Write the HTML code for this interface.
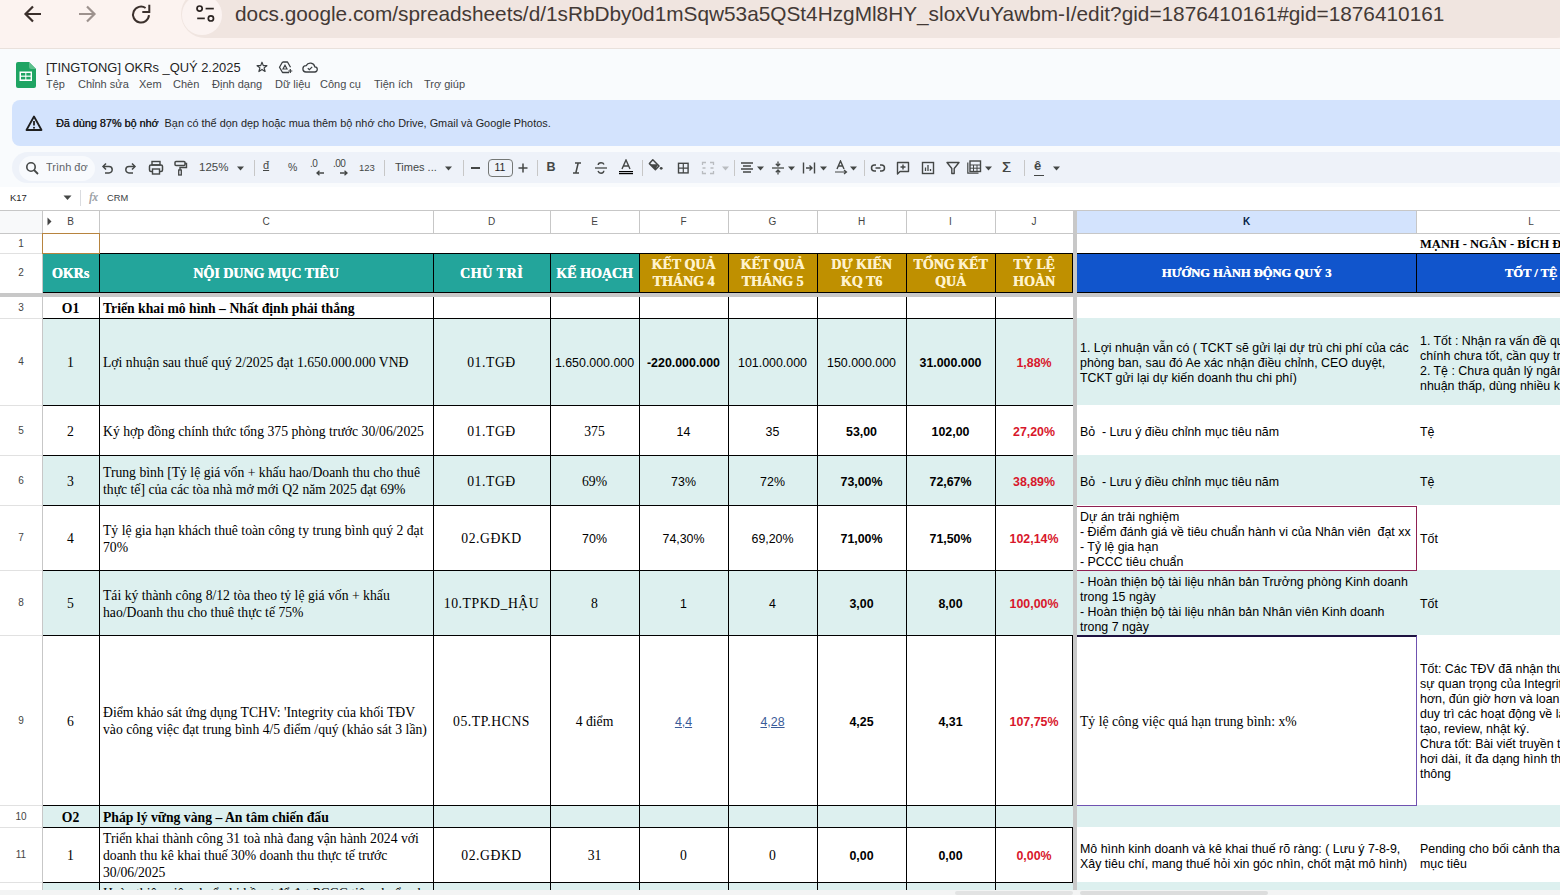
<!DOCTYPE html>
<html><head><meta charset="utf-8"><style>
*{margin:0;padding:0;box-sizing:border-box}
html,body{width:1560px;height:895px;overflow:hidden;background:#f9fbfd;font-family:"Liberation Sans",sans-serif}
.a{position:absolute}
.t{position:absolute;white-space:nowrap}
.cell{position:absolute;display:flex;align-items:center;overflow:hidden}
</style></head><body>
<div class="a" style="left:0;top:0;width:1560px;height:48px;background:#fcf3f0"></div><div class="a" style="left:0;top:48px;width:1560px;height:1px;background:#e9e1dc"></div><div class="a" style="left:181px;top:-10px;width:1400px;height:48px;border-radius:24px;background:#f0e5e0"></div><div class="a" style="left:182px;top:-5px;width:40px;height:40px;border-radius:50%;background:#fbf3f1"></div><svg class="a" style="left:22px;top:3px" width="22" height="22" viewBox="0 0 22 22"><path d="M19 11H4M11 3.5L3.5 11 11 18.5" fill="none" stroke="#3b302c" stroke-width="2.2"/></svg><svg class="a" style="left:76px;top:3px" width="22" height="22" viewBox="0 0 22 22"><path d="M3 11H18M11 3.5L18.5 11 11 18.5" fill="none" stroke="#9d928e" stroke-width="2.2"/></svg><svg class="a" style="left:120px;top:0px" width="40" height="30" viewBox="120 0 40 30"><path d="M149 15.2A8 8 0 1 1 145.6 8" fill="none" stroke="#3b302c" stroke-width="2"/><path d="M149.3 4.8V12H142.3" fill="none" stroke="#3b302c" stroke-width="2"/></svg><svg class="a" style="left:190px;top:0px" width="30" height="30" viewBox="190 0 30 30"><circle cx="199.6" cy="8.6" r="2.6" fill="none" stroke="#2b2422" stroke-width="1.7"/><path d="M205.6 8.6H213.8" stroke="#2b2422" stroke-width="1.7"/><circle cx="210.9" cy="18.4" r="2.6" fill="none" stroke="#2b2422" stroke-width="1.7"/><path d="M197.2 18.4H204.8" stroke="#2b2422" stroke-width="1.7"/></svg><div class="t" style="left:235px;top:1px;font-size:20.8px;line-height:26px;color:#433935;letter-spacing:0px">docs.google.com/spreadsheets/d/1sRbDby0d1mSqw53a5QSt4HzgMl8HY_sloxVuYawbm-I/edit?gid=1876410161#gid=1876410161</div><svg class="a" style="left:16px;top:62px" width="20" height="26" viewBox="0 0 20 26"><path d="M2 0H13L20 7V24a2 2 0 0 1-2 2H2a2 2 0 0 1-2-2V2a2 2 0 0 1 2-2z" fill="#1fa463"/><path d="M13 0L20 7H15a2 2 0 0 1-2-2z" fill="#5cc08d"/><rect x="3.5" y="9.5" width="12.5" height="9.5" fill="#fff"/><rect x="5" y="11" width="4.3" height="2.6" fill="#1fa463"/><rect x="10.3" y="11" width="4.3" height="2.6" fill="#1fa463"/><rect x="5" y="14.8" width="4.3" height="2.6" fill="#1fa463"/><rect x="10.3" y="14.8" width="4.3" height="2.6" fill="#1fa463"/></svg><div class="t" style="left:46px;top:59px;font-size:12.9px;line-height:17px;color:#1f1f1f">[TINGTONG] OKRs _QUÝ 2.2025</div><svg class="a" style="left:256px;top:61px" width="12" height="12" viewBox="0 0 12 12"><path d="M6 1.2L7.3 4.6 10.9 4.7 8.1 6.9 9.1 10.5 6 8.4 2.9 10.5 3.9 6.9 1.1 4.7 4.7 4.6z" fill="none" stroke="#3c4043" stroke-width="1.2" stroke-linejoin="round"/></svg><svg class="a" style="left:278px;top:61px" width="15" height="13" viewBox="0 0 15 13"><path d="M4.5 1H9.5L12.5 6.2M11 11.5H4.5L1.5 6.2 4.5 1" fill="none" stroke="#3c4043" stroke-width="1.3" stroke-linejoin="round"/><path d="M7 4.3L9 8H5z" fill="none" stroke="#3c4043" stroke-width="1.2"/><path d="M12.3 8V12M10.3 10H14.3" stroke="#3c4043" stroke-width="1.2"/></svg><svg class="a" style="left:302px;top:62px" width="16" height="11" viewBox="0 0 16 11"><path d="M4 10H12.5a2.6 2.6 0 0 0 0.3-5.2A4.6 4.6 0 0 0 4.2 3.6 3.2 3.2 0 0 0 4 10z" fill="none" stroke="#3c4043" stroke-width="1.3"/><path d="M5.8 6.2L7.4 7.7 10.2 4.9" fill="none" stroke="#3c4043" stroke-width="1.2"/></svg><div class="t" style="left:46px;top:77px;font-size:11px;line-height:14px;color:#474a4d">Tệp</div><div class="t" style="left:78px;top:77px;font-size:11px;line-height:14px;color:#474a4d">Chỉnh sửa</div><div class="t" style="left:139px;top:77px;font-size:11px;line-height:14px;color:#474a4d">Xem</div><div class="t" style="left:173px;top:77px;font-size:11px;line-height:14px;color:#474a4d">Chèn</div><div class="t" style="left:212px;top:77px;font-size:11px;line-height:14px;color:#474a4d">Định dạng</div><div class="t" style="left:275px;top:77px;font-size:11px;line-height:14px;color:#474a4d">Dữ liệu</div><div class="t" style="left:320px;top:77px;font-size:11px;line-height:14px;color:#474a4d">Công cụ</div><div class="t" style="left:374px;top:77px;font-size:11px;line-height:14px;color:#474a4d">Tiện ích</div><div class="t" style="left:424px;top:77px;font-size:11px;line-height:14px;color:#474a4d">Trợ giúp</div><div class="a" style="left:12px;top:100px;width:1560px;height:46px;border-radius:8px;background:#d3e3fd"></div><svg class="a" style="left:25px;top:115px" width="18" height="16" viewBox="0 0 18 16"><path d="M9 1.5L16.5 15H1.5z" fill="none" stroke="#1f1f1f" stroke-width="1.8" stroke-linejoin="round"/><path d="M9 6V10.5" stroke="#1f1f1f" stroke-width="1.8"/><circle cx="9" cy="12.7" r="1" fill="#1f1f1f"/></svg><div class="t" style="left:56px;top:116px;font-size:10.9px;line-height:14px;color:#1f1f1f"><span style="font-size:10.8px;text-shadow:0.3px 0 0 #1f1f1f">Đã dùng 87% bộ nhớ</span>&nbsp; Bạn có thể dọn dẹp hoặc mua thêm bộ nhớ cho Drive, Gmail và Google Photos.</div><div class="a" style="left:12px;top:152px;width:1560px;height:31px;border-radius:16px;background:#eef2f9"></div><div class="a" style="left:19px;top:156px;width:76px;height:25px;border-radius:13px;background:#f8fafd"></div><svg class="a" style="left:24.7px;top:160.5px" width="14" height="14" viewBox="0 0 14 14"><circle cx="6" cy="6" r="4.2" fill="none" stroke="#444746" stroke-width="1.6"/><path d="M9 9L13 13" stroke="#444746" stroke-width="1.8"/></svg><div class="t" style="left:46px;top:160px;width:42px;overflow:hidden;font-size:11px;line-height:15px;color:#5f6368">Trình đơn</div><svg class="a" style="left:99.7px;top:160.5px" width="14" height="14" viewBox="0 0 14 14"><path d="M3.5 5.5H9a3.2 3.2 0 0 1 0 6.4H5" fill="none" stroke="#444746" stroke-width="1.5"/><path d="M6 2.5L3 5.5 6 8.5" fill="none" stroke="#444746" stroke-width="1.5"/></svg><svg class="a" style="left:123.80000000000001px;top:160.5px" width="14" height="14" viewBox="0 0 14 14"><path d="M10.5 5.5H5a3.2 3.2 0 0 0 0 6.4H9" fill="none" stroke="#444746" stroke-width="1.5"/><path d="M8 2.5L11 5.5 8 8.5" fill="none" stroke="#444746" stroke-width="1.5"/></svg><svg class="a" style="left:147.8px;top:159.5px" width="16" height="16" viewBox="0 0 16 16"><rect x="4" y="1.5" width="8" height="3.5" fill="none" stroke="#444746" stroke-width="1.4"/><rect x="1.5" y="5" width="13" height="6.5" rx="1.5" fill="none" stroke="#444746" stroke-width="1.5"/><rect x="4.5" y="9" width="7" height="5" fill="#edf2fa" stroke="#444746" stroke-width="1.4"/></svg><svg class="a" style="left:171.7px;top:159.5px" width="16" height="16" viewBox="0 0 16 16"><rect x="3" y="1.5" width="10" height="4" rx="1" fill="none" stroke="#444746" stroke-width="1.5"/><path d="M13 3.5H14.5V7.5H8V10" fill="none" stroke="#444746" stroke-width="1.4"/><rect x="6.7" y="10" width="2.6" height="5" fill="none" stroke="#444746" stroke-width="1.3"/></svg><div class="t" style="left:199px;top:160px;font-size:11.5px;line-height:15px;color:#444746">125%</div><svg class="a" style="left:235.5px;top:163.5px" width="9" height="9" viewBox="0 0 9 9"><path d="M1 2.5H8L4.5 6.5z" fill="#444746"/></svg><div class="a" style="left:253.5px;top:160px;width:1px;height:16px;background:#c7c7c7"></div><div class="t" style="left:263px;top:158px;font-size:11px;line-height:15px;color:#444746;text-decoration:underline">đ</div><div class="t" style="left:288px;top:160px;font-size:10.5px;line-height:15px;color:#444746">%</div><div class="t" style="left:310px;top:157px;font-size:10px;line-height:13px;color:#444746;letter-spacing:-0.5px">.0</div><svg class="a" style="left:315.0px;top:170.0px" width="10" height="6" viewBox="0 0 10 6"><path d="M9 3H2M4.5 0.8L2 3 4.5 5.2" fill="none" stroke="#444746" stroke-width="1.3"/></svg><div class="t" style="left:333px;top:157px;font-size:10px;line-height:13px;color:#444746;letter-spacing:-0.5px">.00</div><svg class="a" style="left:339.0px;top:170.0px" width="10" height="6" viewBox="0 0 10 6"><path d="M1 3H8M5.5 0.8L8 3 5.5 5.2" fill="none" stroke="#444746" stroke-width="1.3"/></svg><div class="t" style="left:359px;top:161px;font-size:9.5px;line-height:13px;color:#444746">123</div><div class="a" style="left:383.5px;top:160px;width:1px;height:16px;background:#c7c7c7"></div><div class="t" style="left:395px;top:160px;font-size:11px;line-height:15px;color:#444746">Times ...</div><svg class="a" style="left:444.0px;top:163.5px" width="9" height="9" viewBox="0 0 9 9"><path d="M1 2.5H8L4.5 6.5z" fill="#444746"/></svg><div class="a" style="left:463.4px;top:160px;width:1px;height:16px;background:#c7c7c7"></div><div class="a" style="left:471px;top:167px;width:9px;height:1.5px;background:#444746"></div><div class="a" style="left:487.5px;top:158.5px;width:25px;height:18px;border:1px solid #747775;border-radius:4px"></div><div class="t" style="left:487.5px;width:25px;top:160px;text-align:center;font-size:10.5px;line-height:15px;color:#1f1f1f">11</div><svg class="a" style="left:518.2px;top:162.5px" width="10" height="10" viewBox="0 0 10 10"><path d="M5 0.5V9.5M0.5 5H9.5" stroke="#444746" stroke-width="1.5"/></svg><div class="a" style="left:536.5px;top:160px;width:1px;height:16px;background:#c7c7c7"></div><div class="t" style="left:546.5px;top:159.5px;font-size:12.5px;line-height:15px;font-weight:bold;color:#444746">B</div><svg class="a" style="left:569.5px;top:160.5px" width="14" height="14" viewBox="0 0 14 14"><path d="M5 2H11M3 12H9M8.2 2L5.8 12" fill="none" stroke="#444746" stroke-width="1.5"/></svg><svg class="a" style="left:593.6px;top:160.5px" width="14" height="14" viewBox="0 0 14 14"><path d="M1 7H13" stroke="#444746" stroke-width="1.3"/><path d="M10 3.5C9.5 2.2 8.4 1.8 7 1.8 5.2 1.8 4.2 2.8 4.2 4" fill="none" stroke="#444746" stroke-width="1.4"/><path d="M4 10C4.6 11.6 5.6 12.2 7 12.2 8.8 12.2 9.8 11.2 9.8 9.8" fill="none" stroke="#444746" stroke-width="1.4"/></svg><svg class="a" style="left:618.7px;top:159.0px" width="14" height="16" viewBox="0 0 14 16"><path d="M3 10L7 1L11 10M4.5 7H9.5" fill="none" stroke="#444746" stroke-width="1.4"/><rect x="0" y="12" width="14" height="1.2" fill="#000"/><rect x="0" y="14" width="14" height="1.2" fill="#000"/></svg><div class="a" style="left:641.5px;top:160px;width:1px;height:16px;background:#c7c7c7"></div><svg class="a" style="left:645px;top:155px" width="20" height="20" viewBox="645 155 20 20"><path d="M652.8 159.8L659 166 655.4 169.6 649.4 163.6z" fill="none" stroke="#444746" stroke-width="1.5" stroke-linejoin="round"/><path d="M650.2 164.3H658.3L655.4 169.2z" fill="#444746"/><circle cx="661.2" cy="168.3" r="1.4" fill="#444746"/></svg><svg class="a" style="left:675px;top:160px" width="16" height="16" viewBox="675 160 16 16"><rect x="678.5" y="163.3" width="9.6" height="9.6" fill="none" stroke="#444746" stroke-width="1.4"/><path d="M683.3 163.3V172.9M678.5 168.1H688.1" stroke="#444746" stroke-width="1.2"/></svg><svg class="a" style="left:701.4px;top:160.5px" width="14" height="14" viewBox="0 0 14 14"><path d="M1.5 4V1.5H5M9 1.5H12.5V4M1.5 10V12.5H5M9 12.5H12.5V10M1.5 7H4.5M9.5 7H12.5" fill="none" stroke="#b9bcc0" stroke-width="1.3"/></svg><svg class="a" style="left:720.5px;top:163.5px" width="9" height="9" viewBox="0 0 9 9"><path d="M1 2.5H8L4.5 6.5z" fill="#b9bcc0"/></svg><div class="a" style="left:733.5px;top:160px;width:1px;height:16px;background:#c7c7c7"></div><svg class="a" style="left:739.5px;top:161.0px" width="14" height="13" viewBox="0 0 14 13"><path d="M1 2H13M3 5H11M1 8H13M3 11H11" stroke="#444746" stroke-width="1.4"/></svg><svg class="a" style="left:756.0px;top:163.5px" width="9" height="9" viewBox="0 0 9 9"><path d="M1 2.5H8L4.5 6.5z" fill="#444746"/></svg><svg class="a" style="left:771.0px;top:160.5px" width="14" height="14" viewBox="0 0 14 14"><path d="M1 7H13" stroke="#444746" stroke-width="1.3"/><path d="M7 0.5V5M4.8 2.8L7 5 9.2 2.8M7 13.5V9M4.8 11.2L7 9 9.2 11.2" fill="none" stroke="#444746" stroke-width="1.3"/></svg><svg class="a" style="left:786.5px;top:163.5px" width="9" height="9" viewBox="0 0 9 9"><path d="M1 2.5H8L4.5 6.5z" fill="#444746"/></svg><svg class="a" style="left:802.0px;top:160.5px" width="14" height="14" viewBox="0 0 14 14"><path d="M1.5 1.5V12.5M12.5 1.5V12.5M4 7H10M7.5 4.5L10 7 7.5 9.5" fill="none" stroke="#444746" stroke-width="1.4"/></svg><svg class="a" style="left:818.8px;top:163.5px" width="9" height="9" viewBox="0 0 9 9"><path d="M1 2.5H8L4.5 6.5z" fill="#444746"/></svg><svg class="a" style="left:834.0px;top:160.0px" width="14" height="15" viewBox="0 0 14 15"><path d="M3 9L6.5 1 10 9M4.3 6H8.7" fill="none" stroke="#444746" stroke-width="1.4"/><path d="M1 12H12M10 10L12.5 12 10 14" fill="none" stroke="#444746" stroke-width="1.2"/></svg><svg class="a" style="left:849.4px;top:163.5px" width="9" height="9" viewBox="0 0 9 9"><path d="M1 2.5H8L4.5 6.5z" fill="#444746"/></svg><div class="a" style="left:863.7px;top:160px;width:1px;height:16px;background:#c7c7c7"></div><svg class="a" style="left:870.0px;top:160.5px" width="16" height="14" viewBox="0 0 16 14"><path d="M6 4H4.5a3 3 0 0 0 0 6H6M10 4h1.5a3 3 0 0 1 0 6H10M5.5 7h5" fill="none" stroke="#444746" stroke-width="1.5"/></svg><svg class="a" style="left:895.7px;top:160.5px" width="14" height="14" viewBox="0 0 14 14"><path d="M1.5 1.5H12.5V10.5H4L1.5 13z" fill="none" stroke="#444746" stroke-width="1.4" stroke-linejoin="round"/><path d="M7 3.5V8.5M4.5 6H9.5" stroke="#444746" stroke-width="1.4"/></svg><svg class="a" style="left:920.5px;top:160.5px" width="14" height="14" viewBox="0 0 14 14"><rect x="1.5" y="1.5" width="11" height="11" fill="none" stroke="#444746" stroke-width="1.4"/><path d="M4.5 10V6.5M7 10V4M9.5 10V8" stroke="#444746" stroke-width="1.3"/></svg><svg class="a" style="left:945.6px;top:160.5px" width="14" height="14" viewBox="0 0 14 14"><path d="M1 1.5H13L8.2 7.5V12.5H5.8V7.5z" fill="none" stroke="#444746" stroke-width="1.4" stroke-linejoin="round"/></svg><svg class="a" style="left:967.0px;top:160.0px" width="15" height="15" viewBox="0 0 15 15"><path d="M0.8 2.5V13.2H11.5" fill="none" stroke="#444746" stroke-width="1.2"/><rect x="3" y="1" width="10.5" height="10.5" fill="none" stroke="#444746" stroke-width="1.4"/><path d="M3 5H13.5M3 8.2H13.5M6.5 5V11.5M10 5V11.5" stroke="#444746" stroke-width="1"/></svg><svg class="a" style="left:984.4px;top:163.5px" width="9" height="9" viewBox="0 0 9 9"><path d="M1 2.5H8L4.5 6.5z" fill="#444746"/></svg><div class="t" style="left:1002px;top:159px;font-size:14px;line-height:16px;color:#444746;text-shadow:0.4px 0 0 #444746">Σ</div><div class="a" style="left:1024.4px;top:160px;width:1px;height:16px;background:#c7c7c7"></div><div class="t" style="left:1034px;top:158px;font-size:13px;line-height:16px;font-weight:bold;color:#444746">ê</div><div class="a" style="left:1034px;top:175px;width:10px;height:1.2px;background:#444746"></div><svg class="a" style="left:1051.9px;top:163.5px" width="9" height="9" viewBox="0 0 9 9"><path d="M1 2.5H8L4.5 6.5z" fill="#444746"/></svg><div class="a" style="left:0;top:187px;width:1560px;height:23px;background:#fff"></div><div class="t" style="left:10px;top:192px;font-size:9.5px;line-height:12px;color:#1f1f1f">K17</div><div class="t" style="left:107px;top:192px;font-size:9.3px;line-height:12px;color:#3c4043">CRM</div><svg class="a" style="left:63px;top:195px" width="9" height="6" viewBox="0 0 9 6"><path d="M0.5 0.5H8.5L4.5 5z" fill="#444746"/></svg><div class="a" style="left:80px;top:190px;width:1px;height:16px;background:#dadce0"></div><div class="t" style="left:89px;top:191px;font-family:'Liberation Serif',serif;font-style:italic;font-size:12px;line-height:13px;color:#a0a4a8;text-shadow:0.3px 0 0 #a0a4a8">fx</div><div class="a" style="left:0;top:210px;width:1560px;height:685px;background:#fff"></div><div class="a" style="left:0;top:210px;width:1560px;height:1px;background:#c7c7c7"></div><div class="a" style="left:0;top:233px;width:1560px;height:1px;background:#c7c7c7"></div><div class="a" style="left:1077px;top:211px;width:339px;height:22px;background:#d3e3fd"></div><div class="a" style="left:0;top:211px;width:42px;height:22px;background:#f8f9fa"></div><div class="a" style="left:42px;top:211px;width:1px;height:22px;background:#c7c7c7"></div><svg class="a" style="left:47px;top:217px" width="5" height="9" viewBox="0 0 5 9"><path d="M0.5 0.5L4.5 4.5 0.5 8.5z" fill="#444"/></svg><div class="a" style="left:99px;top:211px;width:1px;height:22px;background:#c7c7c7"></div><div class="t" style="left:42px;width:57px;top:215px;text-align:center;font-size:10px;line-height:14px;color:#444;font-weight:normal">B</div><div class="a" style="left:433px;top:211px;width:1px;height:22px;background:#c7c7c7"></div><div class="t" style="left:99px;width:334px;top:215px;text-align:center;font-size:10px;line-height:14px;color:#444;font-weight:normal">C</div><div class="a" style="left:550px;top:211px;width:1px;height:22px;background:#c7c7c7"></div><div class="t" style="left:433px;width:117px;top:215px;text-align:center;font-size:10px;line-height:14px;color:#444;font-weight:normal">D</div><div class="a" style="left:639px;top:211px;width:1px;height:22px;background:#c7c7c7"></div><div class="t" style="left:550px;width:89px;top:215px;text-align:center;font-size:10px;line-height:14px;color:#444;font-weight:normal">E</div><div class="a" style="left:728px;top:211px;width:1px;height:22px;background:#c7c7c7"></div><div class="t" style="left:639px;width:89px;top:215px;text-align:center;font-size:10px;line-height:14px;color:#444;font-weight:normal">F</div><div class="a" style="left:817px;top:211px;width:1px;height:22px;background:#c7c7c7"></div><div class="t" style="left:728px;width:89px;top:215px;text-align:center;font-size:10px;line-height:14px;color:#444;font-weight:normal">G</div><div class="a" style="left:906px;top:211px;width:1px;height:22px;background:#c7c7c7"></div><div class="t" style="left:817px;width:89px;top:215px;text-align:center;font-size:10px;line-height:14px;color:#444;font-weight:normal">H</div><div class="a" style="left:995px;top:211px;width:1px;height:22px;background:#c7c7c7"></div><div class="t" style="left:906px;width:89px;top:215px;text-align:center;font-size:10px;line-height:14px;color:#444;font-weight:normal">I</div><div class="a" style="left:1073px;top:211px;width:1px;height:22px;background:#c7c7c7"></div><div class="t" style="left:995px;width:78px;top:215px;text-align:center;font-size:10px;line-height:14px;color:#444;font-weight:normal">J</div><div class="a" style="left:1416px;top:211px;width:1px;height:22px;background:#c7c7c7"></div><div class="t" style="left:1077px;width:339px;top:215px;text-align:center;font-size:10px;line-height:14px;color:#041e49;font-weight:bold">K</div><div class="a" style="left:1646px;top:211px;width:1px;height:22px;background:#c7c7c7"></div><div class="t" style="left:1416px;width:230px;top:215px;text-align:center;font-size:10px;line-height:14px;color:#444;font-weight:normal">L</div><div class="a" style="left:42px;top:318px;width:1518px;height:87px;background:#ddf0ef"></div><div class="a" style="left:42px;top:455px;width:1518px;height:50px;background:#ddf0ef"></div><div class="a" style="left:42px;top:570px;width:1518px;height:65px;background:#ddf0ef"></div><div class="a" style="left:42px;top:805px;width:1518px;height:22px;background:#ddf0ef"></div><div class="a" style="left:42px;top:882px;width:1518px;height:30px;background:#ddf0ef"></div><div class="a" style="left:42px;top:253px;width:597px;height:39px;background:#23a59b"></div><div class="a" style="left:639px;top:253px;width:434px;height:39px;background:#bf9000"></div><div class="a" style="left:1077px;top:253px;width:483px;height:39px;background:#1155cc"></div><div class="a" style="left:99px;top:253px;width:1px;height:40px;background:#000"></div><div class="a" style="left:99px;top:297px;width:1px;height:600px;background:#000"></div><div class="a" style="left:433px;top:253px;width:1px;height:40px;background:#000"></div><div class="a" style="left:433px;top:297px;width:1px;height:600px;background:#000"></div><div class="a" style="left:550px;top:253px;width:1px;height:40px;background:#000"></div><div class="a" style="left:550px;top:297px;width:1px;height:600px;background:#000"></div><div class="a" style="left:639px;top:253px;width:1px;height:40px;background:#000"></div><div class="a" style="left:639px;top:297px;width:1px;height:600px;background:#000"></div><div class="a" style="left:728px;top:253px;width:1px;height:40px;background:#000"></div><div class="a" style="left:728px;top:297px;width:1px;height:600px;background:#000"></div><div class="a" style="left:817px;top:253px;width:1px;height:40px;background:#000"></div><div class="a" style="left:817px;top:297px;width:1px;height:600px;background:#000"></div><div class="a" style="left:906px;top:253px;width:1px;height:40px;background:#000"></div><div class="a" style="left:906px;top:297px;width:1px;height:600px;background:#000"></div><div class="a" style="left:995px;top:253px;width:1px;height:40px;background:#000"></div><div class="a" style="left:995px;top:297px;width:1px;height:600px;background:#000"></div><div class="a" style="left:1072px;top:253px;width:1px;height:40px;background:#000"></div><div class="a" style="left:1072px;top:635px;width:1px;height:171px;background:#000"></div><div class="a" style="left:1072px;top:827px;width:1px;height:56px;background:#000"></div><div class="a" style="left:1416px;top:253px;width:1px;height:40px;background:#000"></div><div class="a" style="left:42px;top:253px;width:1031px;height:1px;background:#000"></div><div class="a" style="left:1077px;top:253px;width:483px;height:1px;background:#000"></div><div class="a" style="left:42px;top:292px;width:1031px;height:1px;background:#000"></div><div class="a" style="left:1077px;top:292px;width:483px;height:1px;background:#000"></div><div class="a" style="left:42px;top:318px;width:1031px;height:1px;background:#000"></div><div class="a" style="left:42px;top:405px;width:1031px;height:1px;background:#000"></div><div class="a" style="left:42px;top:455px;width:1031px;height:1px;background:#000"></div><div class="a" style="left:42px;top:505px;width:1031px;height:1px;background:#000"></div><div class="a" style="left:42px;top:570px;width:1031px;height:1px;background:#000"></div><div class="a" style="left:42px;top:635px;width:1031px;height:1px;background:#000"></div><div class="a" style="left:42px;top:805px;width:1031px;height:1px;background:#000"></div><div class="a" style="left:42px;top:827px;width:1031px;height:1px;background:#000"></div><div class="a" style="left:42px;top:882px;width:1031px;height:1px;background:#000"></div><div class="a" style="left:0;top:293px;width:1560px;height:4px;background:#c8c8c8"></div><div class="a" style="left:1073px;top:211px;width:4px;height:690px;background:#c8c8c8"></div><div class="a" style="left:42px;top:233px;width:1px;height:670px;background:#c7c7c7"></div><div class="a" style="left:0;top:253px;width:42px;height:1px;background:#e1e1e1"></div><div class="t" style="left:0;width:42px;top:237px;text-align:center;font-size:10px;line-height:13px;color:#444">1</div><div class="t" style="left:0;width:42px;top:266px;text-align:center;font-size:10px;line-height:13px;color:#444">2</div><div class="a" style="left:0;top:318px;width:42px;height:1px;background:#e1e1e1"></div><div class="t" style="left:0;width:42px;top:301px;text-align:center;font-size:10px;line-height:13px;color:#444">3</div><div class="a" style="left:0;top:405px;width:42px;height:1px;background:#e1e1e1"></div><div class="t" style="left:0;width:42px;top:355px;text-align:center;font-size:10px;line-height:13px;color:#444">4</div><div class="a" style="left:0;top:455px;width:42px;height:1px;background:#e1e1e1"></div><div class="t" style="left:0;width:42px;top:424px;text-align:center;font-size:10px;line-height:13px;color:#444">5</div><div class="a" style="left:0;top:505px;width:42px;height:1px;background:#e1e1e1"></div><div class="t" style="left:0;width:42px;top:474px;text-align:center;font-size:10px;line-height:13px;color:#444">6</div><div class="a" style="left:0;top:570px;width:42px;height:1px;background:#e1e1e1"></div><div class="t" style="left:0;width:42px;top:531px;text-align:center;font-size:10px;line-height:13px;color:#444">7</div><div class="a" style="left:0;top:635px;width:42px;height:1px;background:#e1e1e1"></div><div class="t" style="left:0;width:42px;top:596px;text-align:center;font-size:10px;line-height:13px;color:#444">8</div><div class="a" style="left:0;top:805px;width:42px;height:1px;background:#e1e1e1"></div><div class="t" style="left:0;width:42px;top:714px;text-align:center;font-size:10px;line-height:13px;color:#444">9</div><div class="a" style="left:0;top:827px;width:42px;height:1px;background:#e1e1e1"></div><div class="t" style="left:0;width:42px;top:810px;text-align:center;font-size:10px;line-height:13px;color:#444">10</div><div class="a" style="left:0;top:882px;width:42px;height:1px;background:#e1e1e1"></div><div class="t" style="left:0;width:42px;top:848px;text-align:center;font-size:10px;line-height:13px;color:#444">11</div><div class="a" style="left:0;top:912px;width:42px;height:1px;background:#e1e1e1"></div><div class="t" style="left:0;width:42px;top:891px;text-align:center;font-size:10px;line-height:13px;color:#444">12</div><div class="a" style="left:42px;top:233px;width:58px;height:21px;border:1px solid #b7843f"></div><div class="cell" style="left:42px;top:253px;width:57px;height:39px;justify-content:center;padding:0 4px;"><div style="font-family:'Liberation Serif', serif;font-size:14px;line-height:17px;font-weight:bold;color:#ffffff;text-align:center;white-space:nowrap;position:relative;top:0.5px;letter-spacing:0px;text-shadow:0.35px 0 0 currentColor">OKRs</div></div><div class="cell" style="left:99px;top:253px;width:334px;height:39px;justify-content:center;padding:0 4px;"><div style="font-family:'Liberation Serif', serif;font-size:14px;line-height:17px;font-weight:bold;color:#ffffff;text-align:center;white-space:nowrap;position:relative;top:0.5px;letter-spacing:0px;text-shadow:0.35px 0 0 currentColor">NỘI DUNG MỤC TIÊU</div></div><div class="cell" style="left:433px;top:253px;width:117px;height:39px;justify-content:center;padding:0 4px;"><div style="font-family:'Liberation Serif', serif;font-size:14px;line-height:17px;font-weight:bold;color:#ffffff;text-align:center;white-space:nowrap;position:relative;top:0.5px;letter-spacing:0.55px;text-shadow:0.35px 0 0 currentColor">CHỦ TRÌ</div></div><div class="cell" style="left:550px;top:253px;width:89px;height:39px;justify-content:center;padding:0 4px;"><div style="font-family:'Liberation Serif', serif;font-size:14px;line-height:17px;font-weight:bold;color:#ffffff;text-align:center;white-space:nowrap;position:relative;top:0.5px;letter-spacing:0px;text-shadow:0.35px 0 0 currentColor">KẾ HOẠCH</div></div><div class="cell" style="left:639px;top:253px;width:89px;height:39px;justify-content:center;padding:0 4px;"><div style="font-family:'Liberation Serif', serif;font-size:14px;line-height:17px;font-weight:bold;color:#fff2cc;text-align:center;white-space:nowrap;position:relative;top:0.5px;letter-spacing:0px;text-shadow:0.35px 0 0 currentColor">KẾT QUẢ<br>THÁNG 4</div></div><div class="cell" style="left:728px;top:253px;width:89px;height:39px;justify-content:center;padding:0 4px;"><div style="font-family:'Liberation Serif', serif;font-size:14px;line-height:17px;font-weight:bold;color:#fff2cc;text-align:center;white-space:nowrap;position:relative;top:0.5px;letter-spacing:0px;text-shadow:0.35px 0 0 currentColor">KẾT QUẢ<br>THÁNG 5</div></div><div class="cell" style="left:817px;top:253px;width:89px;height:39px;justify-content:center;padding:0 4px;"><div style="font-family:'Liberation Serif', serif;font-size:14px;line-height:17px;font-weight:bold;color:#fff2cc;text-align:center;white-space:nowrap;position:relative;top:0.5px;letter-spacing:0px;text-shadow:0.35px 0 0 currentColor">DỰ KIẾN<br>KQ T6</div></div><div class="cell" style="left:906px;top:253px;width:89px;height:39px;justify-content:center;padding:0 4px;"><div style="font-family:'Liberation Serif', serif;font-size:14px;line-height:17px;font-weight:bold;color:#fff2cc;text-align:center;white-space:nowrap;position:relative;top:0.5px;letter-spacing:0px;text-shadow:0.35px 0 0 currentColor">TỔNG KẾT<br>QUẢ</div></div><div class="cell" style="left:995px;top:253px;width:78px;height:39px;justify-content:center;padding:0 4px;"><div style="font-family:'Liberation Serif', serif;font-size:14px;line-height:17px;font-weight:bold;color:#fff2cc;text-align:center;white-space:nowrap;position:relative;top:0.5px;letter-spacing:0px;text-shadow:0.35px 0 0 currentColor">TỶ LỆ<br>HOÀN</div></div><div class="cell" style="left:1077px;top:253px;width:339px;height:39px;justify-content:center;padding:0 4px;"><div style="font-family:'Liberation Serif', serif;font-size:12.5px;line-height:17px;font-weight:bold;color:#ffffff;text-align:center;white-space:nowrap;position:relative;top:0.5px;letter-spacing:0px;text-shadow:0.35px 0 0 currentColor">HƯỚNG HÀNH ĐỘNG QUÝ 3</div></div><div class="cell" style="left:1416px;top:253px;width:230px;height:39px;justify-content:center;padding:0 4px;"><div style="font-family:'Liberation Serif', serif;font-size:12.5px;line-height:17px;font-weight:bold;color:#ffffff;text-align:center;white-space:nowrap;position:relative;top:0.5px;letter-spacing:0px;text-shadow:0.35px 0 0 currentColor">TỐT / TỆ</div></div><div class="cell" style="left:1416px;top:233px;width:230px;height:20px;justify-content:flex-start;padding:0 4px;"><div style="font-family:'Liberation Serif', serif;font-size:12.5px;line-height:17px;font-weight:bold;color:#000;text-align:left;white-space:nowrap;position:relative;top:1px;letter-spacing:0px;">MẠNH - NGÂN - BÍCH ĐÀO</div></div><div class="cell" style="left:42px;top:297px;width:57px;height:21px;justify-content:center;padding:0 4px;"><div style="font-family:'Liberation Serif', serif;font-size:13.7px;line-height:17px;font-weight:bold;color:#000;text-align:center;white-space:nowrap;position:relative;top:1px;letter-spacing:0px;">O1</div></div><div class="cell" style="left:99px;top:297px;width:334px;height:21px;justify-content:flex-start;padding:0 4px;"><div style="font-family:'Liberation Serif', serif;font-size:13.7px;line-height:17px;font-weight:bold;color:#000;text-align:left;white-space:nowrap;position:relative;top:1px;letter-spacing:0px;">Triển khai mô hình – Nhất định phải thắng</div></div><div class="cell" style="left:42px;top:318px;width:57px;height:87px;justify-content:center;padding:0 4px;"><div style="font-family:'Liberation Serif', serif;font-size:13.7px;line-height:17px;font-weight:normal;color:#000;text-align:center;white-space:nowrap;position:relative;top:1px;letter-spacing:0px;">1</div></div><div class="cell" style="left:99px;top:318px;width:334px;height:87px;justify-content:flex-start;padding:0 4px;"><div style="font-family:'Liberation Serif', serif;font-size:13.7px;line-height:17px;font-weight:normal;color:#000;text-align:left;white-space:nowrap;position:relative;top:1px;letter-spacing:0px;">Lợi nhuận sau thuế quý 2/2025 đạt 1.650.000.000 VNĐ</div></div><div class="cell" style="left:433px;top:318px;width:117px;height:87px;justify-content:center;padding:0 4px;"><div style="font-family:'Liberation Serif', serif;font-size:13.7px;line-height:17px;font-weight:normal;color:#000;text-align:center;white-space:nowrap;position:relative;top:1px;letter-spacing:0.55px;">01.TGĐ</div></div><div class="cell" style="left:550px;top:318px;width:89px;height:87px;justify-content:center;padding:0 4px;"><div style="font-family:'Liberation Sans', sans-serif;font-size:12.4px;line-height:15px;font-weight:normal;color:#000;text-align:center;white-space:nowrap;position:relative;top:2px;letter-spacing:0px;">1.650.000.000</div></div><div class="cell" style="left:639px;top:318px;width:89px;height:87px;justify-content:center;padding:0 4px;"><div style="font-family:'Liberation Sans', sans-serif;font-size:12.4px;line-height:15px;font-weight:bold;color:#000;text-align:center;white-space:nowrap;position:relative;top:2px;letter-spacing:0px;">-220.000.000</div></div><div class="cell" style="left:728px;top:318px;width:89px;height:87px;justify-content:center;padding:0 4px;"><div style="font-family:'Liberation Sans', sans-serif;font-size:12.4px;line-height:15px;font-weight:normal;color:#000;text-align:center;white-space:nowrap;position:relative;top:2px;letter-spacing:0px;">101.000.000</div></div><div class="cell" style="left:817px;top:318px;width:89px;height:87px;justify-content:center;padding:0 4px;"><div style="font-family:'Liberation Sans', sans-serif;font-size:12.4px;line-height:15px;font-weight:normal;color:#000;text-align:center;white-space:nowrap;position:relative;top:2px;letter-spacing:0px;">150.000.000</div></div><div class="cell" style="left:906px;top:318px;width:89px;height:87px;justify-content:center;padding:0 4px;"><div style="font-family:'Liberation Sans', sans-serif;font-size:12.4px;line-height:15px;font-weight:bold;color:#000;text-align:center;white-space:nowrap;position:relative;top:2px;letter-spacing:0px;">31.000.000</div></div><div class="cell" style="left:995px;top:318px;width:78px;height:87px;justify-content:center;padding:0 4px;"><div style="font-family:'Liberation Sans', sans-serif;font-size:12.4px;line-height:15px;font-weight:bold;color:#d8172b;text-align:center;white-space:nowrap;position:relative;top:2px;letter-spacing:0px;">1,88%</div></div><div class="cell" style="left:1077px;top:318px;width:339px;height:87px;justify-content:flex-start;padding:0 3px;"><div style="font-family:'Liberation Sans', sans-serif;font-size:12.4px;line-height:15px;font-weight:normal;color:#000;text-align:left;white-space:nowrap;position:relative;top:2px;letter-spacing:0px;">1. Lợi nhuận vẫn có ( TCKT sẽ gửi lại dự trù chi phí của các<br>phòng ban, sau đó Ae xác nhận điều chỉnh, CEO duyệt,<br>TCKT gửi lại dự kiến doanh thu chi phí)</div></div><div class="cell" style="left:1416px;top:318px;width:230px;height:87px;justify-content:flex-start;padding:0 4px;"><div style="font-family:'Liberation Sans', sans-serif;font-size:12.4px;line-height:15px;font-weight:normal;color:#000;text-align:left;white-space:nowrap;position:relative;top:2px;letter-spacing:0px;">1. Tốt : Nhận ra vấn đề quản trị tài<br>chính chưa tốt, cần quy trình<br>2. Tệ : Chưa quản lý ngân sách, lợi<br>nhuận thấp, dùng nhiều khoản</div></div><div class="cell" style="left:42px;top:405px;width:57px;height:50px;justify-content:center;padding:0 4px;"><div style="font-family:'Liberation Serif', serif;font-size:13.7px;line-height:17px;font-weight:normal;color:#000;text-align:center;white-space:nowrap;position:relative;top:1px;letter-spacing:0px;">2</div></div><div class="cell" style="left:99px;top:405px;width:334px;height:50px;justify-content:flex-start;padding:0 4px;"><div style="font-family:'Liberation Serif', serif;font-size:13.7px;line-height:17px;font-weight:normal;color:#000;text-align:left;white-space:nowrap;position:relative;top:1px;letter-spacing:0px;">Ký hợp đồng chính thức tổng 375 phòng trước 30/06/2025</div></div><div class="cell" style="left:433px;top:405px;width:117px;height:50px;justify-content:center;padding:0 4px;"><div style="font-family:'Liberation Serif', serif;font-size:13.7px;line-height:17px;font-weight:normal;color:#000;text-align:center;white-space:nowrap;position:relative;top:1px;letter-spacing:0.55px;">01.TGĐ</div></div><div class="cell" style="left:550px;top:405px;width:89px;height:50px;justify-content:center;padding:0 4px;"><div style="font-family:'Liberation Serif', serif;font-size:13.7px;line-height:17px;font-weight:normal;color:#000;text-align:center;white-space:nowrap;position:relative;top:1px;letter-spacing:0px;">375</div></div><div class="cell" style="left:639px;top:405px;width:89px;height:50px;justify-content:center;padding:0 4px;"><div style="font-family:'Liberation Sans', sans-serif;font-size:12.4px;line-height:15px;font-weight:normal;color:#000;text-align:center;white-space:nowrap;position:relative;top:2px;letter-spacing:0px;">14</div></div><div class="cell" style="left:728px;top:405px;width:89px;height:50px;justify-content:center;padding:0 4px;"><div style="font-family:'Liberation Sans', sans-serif;font-size:12.4px;line-height:15px;font-weight:normal;color:#000;text-align:center;white-space:nowrap;position:relative;top:2px;letter-spacing:0px;">35</div></div><div class="cell" style="left:817px;top:405px;width:89px;height:50px;justify-content:center;padding:0 4px;"><div style="font-family:'Liberation Sans', sans-serif;font-size:12.4px;line-height:15px;font-weight:bold;color:#000;text-align:center;white-space:nowrap;position:relative;top:2px;letter-spacing:0px;">53,00</div></div><div class="cell" style="left:906px;top:405px;width:89px;height:50px;justify-content:center;padding:0 4px;"><div style="font-family:'Liberation Sans', sans-serif;font-size:12.4px;line-height:15px;font-weight:bold;color:#000;text-align:center;white-space:nowrap;position:relative;top:2px;letter-spacing:0px;">102,00</div></div><div class="cell" style="left:995px;top:405px;width:78px;height:50px;justify-content:center;padding:0 4px;"><div style="font-family:'Liberation Sans', sans-serif;font-size:12.4px;line-height:15px;font-weight:bold;color:#d8172b;text-align:center;white-space:nowrap;position:relative;top:2px;letter-spacing:0px;">27,20%</div></div><div class="cell" style="left:1077px;top:405px;width:339px;height:50px;justify-content:flex-start;padding:0 3px;"><div style="font-family:'Liberation Sans', sans-serif;font-size:12.4px;line-height:15px;font-weight:normal;color:#000;text-align:left;white-space:nowrap;position:relative;top:2px;letter-spacing:0px;">Bỏ&nbsp; - Lưu ý điều chỉnh mục tiêu năm</div></div><div class="cell" style="left:1416px;top:405px;width:230px;height:50px;justify-content:flex-start;padding:0 4px;"><div style="font-family:'Liberation Sans', sans-serif;font-size:12.4px;line-height:15px;font-weight:normal;color:#000;text-align:left;white-space:nowrap;position:relative;top:2px;letter-spacing:0px;">Tệ</div></div><div class="cell" style="left:42px;top:455px;width:57px;height:50px;justify-content:center;padding:0 4px;"><div style="font-family:'Liberation Serif', serif;font-size:13.7px;line-height:17px;font-weight:normal;color:#000;text-align:center;white-space:nowrap;position:relative;top:1px;letter-spacing:0px;">3</div></div><div class="cell" style="left:99px;top:455px;width:334px;height:50px;justify-content:flex-start;padding:0 4px;"><div style="font-family:'Liberation Serif', serif;font-size:13.7px;line-height:17px;font-weight:normal;color:#000;text-align:left;white-space:nowrap;position:relative;top:1px;letter-spacing:0px;">Trung bình [Tỷ lệ giá vốn + khấu hao/Doanh thu cho thuê<br>thực tế] của các tòa nhà mở mới Q2 năm 2025 đạt 69%</div></div><div class="cell" style="left:433px;top:455px;width:117px;height:50px;justify-content:center;padding:0 4px;"><div style="font-family:'Liberation Serif', serif;font-size:13.7px;line-height:17px;font-weight:normal;color:#000;text-align:center;white-space:nowrap;position:relative;top:1px;letter-spacing:0.55px;">01.TGĐ</div></div><div class="cell" style="left:550px;top:455px;width:89px;height:50px;justify-content:center;padding:0 4px;"><div style="font-family:'Liberation Serif', serif;font-size:13.7px;line-height:17px;font-weight:normal;color:#000;text-align:center;white-space:nowrap;position:relative;top:1px;letter-spacing:0px;">69%</div></div><div class="cell" style="left:639px;top:455px;width:89px;height:50px;justify-content:center;padding:0 4px;"><div style="font-family:'Liberation Sans', sans-serif;font-size:12.4px;line-height:15px;font-weight:normal;color:#000;text-align:center;white-space:nowrap;position:relative;top:2px;letter-spacing:0px;">73%</div></div><div class="cell" style="left:728px;top:455px;width:89px;height:50px;justify-content:center;padding:0 4px;"><div style="font-family:'Liberation Sans', sans-serif;font-size:12.4px;line-height:15px;font-weight:normal;color:#000;text-align:center;white-space:nowrap;position:relative;top:2px;letter-spacing:0px;">72%</div></div><div class="cell" style="left:817px;top:455px;width:89px;height:50px;justify-content:center;padding:0 4px;"><div style="font-family:'Liberation Sans', sans-serif;font-size:12.4px;line-height:15px;font-weight:bold;color:#000;text-align:center;white-space:nowrap;position:relative;top:2px;letter-spacing:0px;">73,00%</div></div><div class="cell" style="left:906px;top:455px;width:89px;height:50px;justify-content:center;padding:0 4px;"><div style="font-family:'Liberation Sans', sans-serif;font-size:12.4px;line-height:15px;font-weight:bold;color:#000;text-align:center;white-space:nowrap;position:relative;top:2px;letter-spacing:0px;">72,67%</div></div><div class="cell" style="left:995px;top:455px;width:78px;height:50px;justify-content:center;padding:0 4px;"><div style="font-family:'Liberation Sans', sans-serif;font-size:12.4px;line-height:15px;font-weight:bold;color:#d8172b;text-align:center;white-space:nowrap;position:relative;top:2px;letter-spacing:0px;">38,89%</div></div><div class="cell" style="left:1077px;top:455px;width:339px;height:50px;justify-content:flex-start;padding:0 3px;"><div style="font-family:'Liberation Sans', sans-serif;font-size:12.4px;line-height:15px;font-weight:normal;color:#000;text-align:left;white-space:nowrap;position:relative;top:2px;letter-spacing:0px;">Bỏ&nbsp; - Lưu ý điều chỉnh mục tiêu năm</div></div><div class="cell" style="left:1416px;top:455px;width:230px;height:50px;justify-content:flex-start;padding:0 4px;"><div style="font-family:'Liberation Sans', sans-serif;font-size:12.4px;line-height:15px;font-weight:normal;color:#000;text-align:left;white-space:nowrap;position:relative;top:2px;letter-spacing:0px;">Tệ</div></div><div class="cell" style="left:42px;top:505px;width:57px;height:65px;justify-content:center;padding:0 4px;"><div style="font-family:'Liberation Serif', serif;font-size:13.7px;line-height:17px;font-weight:normal;color:#000;text-align:center;white-space:nowrap;position:relative;top:1px;letter-spacing:0px;">4</div></div><div class="cell" style="left:99px;top:505px;width:334px;height:65px;justify-content:flex-start;padding:0 4px;"><div style="font-family:'Liberation Serif', serif;font-size:13.7px;line-height:17px;font-weight:normal;color:#000;text-align:left;white-space:nowrap;position:relative;top:1px;letter-spacing:0px;">Tỷ lệ gia hạn khách thuê toàn công ty trung bình quý 2 đạt<br>70%</div></div><div class="cell" style="left:433px;top:505px;width:117px;height:65px;justify-content:center;padding:0 4px;"><div style="font-family:'Liberation Serif', serif;font-size:13.7px;line-height:17px;font-weight:normal;color:#000;text-align:center;white-space:nowrap;position:relative;top:1px;letter-spacing:0.55px;">02.GĐKD</div></div><div class="cell" style="left:550px;top:505px;width:89px;height:65px;justify-content:center;padding:0 4px;"><div style="font-family:'Liberation Sans', sans-serif;font-size:12.4px;line-height:15px;font-weight:normal;color:#000;text-align:center;white-space:nowrap;position:relative;top:2px;letter-spacing:0px;">70%</div></div><div class="cell" style="left:639px;top:505px;width:89px;height:65px;justify-content:center;padding:0 4px;"><div style="font-family:'Liberation Sans', sans-serif;font-size:12.4px;line-height:15px;font-weight:normal;color:#000;text-align:center;white-space:nowrap;position:relative;top:2px;letter-spacing:0px;">74,30%</div></div><div class="cell" style="left:728px;top:505px;width:89px;height:65px;justify-content:center;padding:0 4px;"><div style="font-family:'Liberation Sans', sans-serif;font-size:12.4px;line-height:15px;font-weight:normal;color:#000;text-align:center;white-space:nowrap;position:relative;top:2px;letter-spacing:0px;">69,20%</div></div><div class="cell" style="left:817px;top:505px;width:89px;height:65px;justify-content:center;padding:0 4px;"><div style="font-family:'Liberation Sans', sans-serif;font-size:12.4px;line-height:15px;font-weight:bold;color:#000;text-align:center;white-space:nowrap;position:relative;top:2px;letter-spacing:0px;">71,00%</div></div><div class="cell" style="left:906px;top:505px;width:89px;height:65px;justify-content:center;padding:0 4px;"><div style="font-family:'Liberation Sans', sans-serif;font-size:12.4px;line-height:15px;font-weight:bold;color:#000;text-align:center;white-space:nowrap;position:relative;top:2px;letter-spacing:0px;">71,50%</div></div><div class="cell" style="left:995px;top:505px;width:78px;height:65px;justify-content:center;padding:0 4px;"><div style="font-family:'Liberation Sans', sans-serif;font-size:12.4px;line-height:15px;font-weight:bold;color:#d8172b;text-align:center;white-space:nowrap;position:relative;top:2px;letter-spacing:0px;">102,14%</div></div><div class="cell" style="left:1077px;top:505px;width:339px;height:65px;justify-content:flex-start;padding:0 3px;"><div style="font-family:'Liberation Sans', sans-serif;font-size:12.4px;line-height:15px;font-weight:normal;color:#000;text-align:left;white-space:nowrap;position:relative;top:2px;letter-spacing:0px;">Dự án trải nghiệm<br>- Điểm đánh giá về tiêu chuẩn hành vi của Nhân viên&nbsp; đạt xx<br>- Tỷ lệ gia hạn<br>- PCCC tiêu chuẩn</div></div><div class="cell" style="left:1416px;top:505px;width:230px;height:65px;justify-content:flex-start;padding:0 4px;"><div style="font-family:'Liberation Sans', sans-serif;font-size:12.4px;line-height:15px;font-weight:normal;color:#000;text-align:left;white-space:nowrap;position:relative;top:2px;letter-spacing:0px;">Tốt</div></div><div class="cell" style="left:42px;top:570px;width:57px;height:65px;justify-content:center;padding:0 4px;"><div style="font-family:'Liberation Serif', serif;font-size:13.7px;line-height:17px;font-weight:normal;color:#000;text-align:center;white-space:nowrap;position:relative;top:1px;letter-spacing:0px;">5</div></div><div class="cell" style="left:99px;top:570px;width:334px;height:65px;justify-content:flex-start;padding:0 4px;"><div style="font-family:'Liberation Serif', serif;font-size:13.7px;line-height:17px;font-weight:normal;color:#000;text-align:left;white-space:nowrap;position:relative;top:1px;letter-spacing:0px;">Tái ký thành công 8/12 tòa theo tỷ lệ giá vốn + khấu<br>hao/Doanh thu cho thuê thực tế 75%</div></div><div class="cell" style="left:433px;top:570px;width:117px;height:65px;justify-content:center;padding:0 4px;"><div style="font-family:'Liberation Serif', serif;font-size:13.7px;line-height:17px;font-weight:normal;color:#000;text-align:center;white-space:nowrap;position:relative;top:1px;letter-spacing:0.55px;">10.TPKD_HẬU</div></div><div class="cell" style="left:550px;top:570px;width:89px;height:65px;justify-content:center;padding:0 4px;"><div style="font-family:'Liberation Serif', serif;font-size:13.7px;line-height:17px;font-weight:normal;color:#000;text-align:center;white-space:nowrap;position:relative;top:1px;letter-spacing:0px;">8</div></div><div class="cell" style="left:639px;top:570px;width:89px;height:65px;justify-content:center;padding:0 4px;"><div style="font-family:'Liberation Sans', sans-serif;font-size:12.4px;line-height:15px;font-weight:normal;color:#000;text-align:center;white-space:nowrap;position:relative;top:2px;letter-spacing:0px;">1</div></div><div class="cell" style="left:728px;top:570px;width:89px;height:65px;justify-content:center;padding:0 4px;"><div style="font-family:'Liberation Sans', sans-serif;font-size:12.4px;line-height:15px;font-weight:normal;color:#000;text-align:center;white-space:nowrap;position:relative;top:2px;letter-spacing:0px;">4</div></div><div class="cell" style="left:817px;top:570px;width:89px;height:65px;justify-content:center;padding:0 4px;"><div style="font-family:'Liberation Sans', sans-serif;font-size:12.4px;line-height:15px;font-weight:bold;color:#000;text-align:center;white-space:nowrap;position:relative;top:2px;letter-spacing:0px;">3,00</div></div><div class="cell" style="left:906px;top:570px;width:89px;height:65px;justify-content:center;padding:0 4px;"><div style="font-family:'Liberation Sans', sans-serif;font-size:12.4px;line-height:15px;font-weight:bold;color:#000;text-align:center;white-space:nowrap;position:relative;top:2px;letter-spacing:0px;">8,00</div></div><div class="cell" style="left:995px;top:570px;width:78px;height:65px;justify-content:center;padding:0 4px;"><div style="font-family:'Liberation Sans', sans-serif;font-size:12.4px;line-height:15px;font-weight:bold;color:#d8172b;text-align:center;white-space:nowrap;position:relative;top:2px;letter-spacing:0px;">100,00%</div></div><div class="cell" style="left:1077px;top:570px;width:339px;height:65px;justify-content:flex-start;padding:0 3px;"><div style="font-family:'Liberation Sans', sans-serif;font-size:12.4px;line-height:15px;font-weight:normal;color:#000;text-align:left;white-space:nowrap;position:relative;top:2px;letter-spacing:0px;">- Hoàn thiện bộ tài liệu nhân bản Trưởng phòng Kinh doanh<br>trong 15 ngày<br>- Hoàn thiện bộ tài liệu nhân bản Nhân viên Kinh doanh<br>trong 7 ngày</div></div><div class="cell" style="left:1416px;top:570px;width:230px;height:65px;justify-content:flex-start;padding:0 4px;"><div style="font-family:'Liberation Sans', sans-serif;font-size:12.4px;line-height:15px;font-weight:normal;color:#000;text-align:left;white-space:nowrap;position:relative;top:2px;letter-spacing:0px;">Tốt</div></div><div class="cell" style="left:42px;top:635px;width:57px;height:170px;justify-content:center;padding:0 4px;"><div style="font-family:'Liberation Serif', serif;font-size:13.7px;line-height:17px;font-weight:normal;color:#000;text-align:center;white-space:nowrap;position:relative;top:1px;letter-spacing:0px;">6</div></div><div class="cell" style="left:99px;top:635px;width:334px;height:170px;justify-content:flex-start;padding:0 4px;"><div style="font-family:'Liberation Serif', serif;font-size:13.7px;line-height:17px;font-weight:normal;color:#000;text-align:left;white-space:nowrap;position:relative;top:1px;letter-spacing:0px;">Điểm khảo sát ứng dụng TCHV: 'Integrity của khối TĐV<br>vào công việc đạt trung bình 4/5 điểm /quý (khảo sát 3 lần)</div></div><div class="cell" style="left:433px;top:635px;width:117px;height:170px;justify-content:center;padding:0 4px;"><div style="font-family:'Liberation Serif', serif;font-size:13.7px;line-height:17px;font-weight:normal;color:#000;text-align:center;white-space:nowrap;position:relative;top:1px;letter-spacing:0.55px;">05.TP.HCNS</div></div><div class="cell" style="left:550px;top:635px;width:89px;height:170px;justify-content:center;padding:0 4px;"><div style="font-family:'Liberation Serif', serif;font-size:13.7px;line-height:17px;font-weight:normal;color:#000;text-align:center;white-space:nowrap;position:relative;top:1px;letter-spacing:0px;">4 điểm</div></div><div class="cell" style="left:639px;top:635px;width:89px;height:170px;justify-content:center;padding:0 4px;"><div style="font-family:'Liberation Sans', sans-serif;font-size:12.4px;line-height:15px;font-weight:normal;color:#3b5c99;text-align:center;white-space:nowrap;position:relative;top:2px;letter-spacing:0px;text-decoration:underline">4,4</div></div><div class="cell" style="left:728px;top:635px;width:89px;height:170px;justify-content:center;padding:0 4px;"><div style="font-family:'Liberation Sans', sans-serif;font-size:12.4px;line-height:15px;font-weight:normal;color:#3b5c99;text-align:center;white-space:nowrap;position:relative;top:2px;letter-spacing:0px;text-decoration:underline">4,28</div></div><div class="cell" style="left:817px;top:635px;width:89px;height:170px;justify-content:center;padding:0 4px;"><div style="font-family:'Liberation Sans', sans-serif;font-size:12.4px;line-height:15px;font-weight:bold;color:#000;text-align:center;white-space:nowrap;position:relative;top:2px;letter-spacing:0px;">4,25</div></div><div class="cell" style="left:906px;top:635px;width:89px;height:170px;justify-content:center;padding:0 4px;"><div style="font-family:'Liberation Sans', sans-serif;font-size:12.4px;line-height:15px;font-weight:bold;color:#000;text-align:center;white-space:nowrap;position:relative;top:2px;letter-spacing:0px;">4,31</div></div><div class="cell" style="left:995px;top:635px;width:78px;height:170px;justify-content:center;padding:0 4px;"><div style="font-family:'Liberation Sans', sans-serif;font-size:12.4px;line-height:15px;font-weight:bold;color:#d8172b;text-align:center;white-space:nowrap;position:relative;top:2px;letter-spacing:0px;">107,75%</div></div><div class="cell" style="left:1077px;top:635px;width:339px;height:170px;justify-content:flex-start;padding:0 3px;"><div style="font-family:'Liberation Serif', serif;font-size:13.7px;line-height:17px;font-weight:normal;color:#000;text-align:left;white-space:nowrap;position:relative;top:1px;letter-spacing:0px;">Tỷ lệ công việc quá hạn trung bình: x%</div></div><div class="cell" style="left:1416px;top:635px;width:230px;height:170px;justify-content:flex-start;padding:0 4px;"><div style="font-family:'Liberation Sans', sans-serif;font-size:12.4px;line-height:15px;font-weight:normal;color:#000;text-align:left;white-space:nowrap;position:relative;top:2px;letter-spacing:0px;">Tốt: Các TĐV đã nhận thức được<br>sự quan trọng của Integrity<br>hơn, đún giờ hơn và loan<br>duy trì các hoạt động về lãnh<br>tạo, review, nhật ký.<br>Chưa tốt: Bài viết truyền thông<br>hơi dài, ít đa dạng hình thức truyền<br>thông</div></div><div class="cell" style="left:42px;top:805px;width:57px;height:22px;justify-content:center;padding:0 4px;"><div style="font-family:'Liberation Serif', serif;font-size:13.7px;line-height:17px;font-weight:bold;color:#000;text-align:center;white-space:nowrap;position:relative;top:1px;letter-spacing:0px;">O2</div></div><div class="cell" style="left:99px;top:805px;width:334px;height:22px;justify-content:flex-start;padding:0 4px;"><div style="font-family:'Liberation Serif', serif;font-size:13.7px;line-height:17px;font-weight:bold;color:#000;text-align:left;white-space:nowrap;position:relative;top:1px;letter-spacing:0px;">Pháp lý vững vàng – An tâm chiến đấu</div></div><div class="cell" style="left:42px;top:827px;width:57px;height:55px;justify-content:center;padding:0 4px;"><div style="font-family:'Liberation Serif', serif;font-size:13.7px;line-height:17px;font-weight:normal;color:#000;text-align:center;white-space:nowrap;position:relative;top:1px;letter-spacing:0px;">1</div></div><div class="cell" style="left:99px;top:827px;width:334px;height:55px;justify-content:flex-start;padding:0 4px;"><div style="font-family:'Liberation Serif', serif;font-size:13.7px;line-height:17px;font-weight:normal;color:#000;text-align:left;white-space:nowrap;position:relative;top:1px;letter-spacing:0px;">Triển khai thành công 31 toà nhà đang vận hành 2024 với<br>doanh thu kê khai thuế 30% doanh thu thực tế trước<br>30/06/2025</div></div><div class="cell" style="left:433px;top:827px;width:117px;height:55px;justify-content:center;padding:0 4px;"><div style="font-family:'Liberation Serif', serif;font-size:13.7px;line-height:17px;font-weight:normal;color:#000;text-align:center;white-space:nowrap;position:relative;top:1px;letter-spacing:0.55px;">02.GĐKD</div></div><div class="cell" style="left:550px;top:827px;width:89px;height:55px;justify-content:center;padding:0 4px;"><div style="font-family:'Liberation Serif', serif;font-size:13.7px;line-height:17px;font-weight:normal;color:#000;text-align:center;white-space:nowrap;position:relative;top:1px;letter-spacing:0px;">31</div></div><div class="cell" style="left:639px;top:827px;width:89px;height:55px;justify-content:center;padding:0 4px;"><div style="font-family:'Liberation Serif', serif;font-size:13.7px;line-height:17px;font-weight:normal;color:#000;text-align:center;white-space:nowrap;position:relative;top:1px;letter-spacing:0px;">0</div></div><div class="cell" style="left:728px;top:827px;width:89px;height:55px;justify-content:center;padding:0 4px;"><div style="font-family:'Liberation Serif', serif;font-size:13.7px;line-height:17px;font-weight:normal;color:#000;text-align:center;white-space:nowrap;position:relative;top:1px;letter-spacing:0px;">0</div></div><div class="cell" style="left:817px;top:827px;width:89px;height:55px;justify-content:center;padding:0 4px;"><div style="font-family:'Liberation Sans', sans-serif;font-size:12.4px;line-height:15px;font-weight:bold;color:#000;text-align:center;white-space:nowrap;position:relative;top:2px;letter-spacing:0px;">0,00</div></div><div class="cell" style="left:906px;top:827px;width:89px;height:55px;justify-content:center;padding:0 4px;"><div style="font-family:'Liberation Sans', sans-serif;font-size:12.4px;line-height:15px;font-weight:bold;color:#000;text-align:center;white-space:nowrap;position:relative;top:2px;letter-spacing:0px;">0,00</div></div><div class="cell" style="left:995px;top:827px;width:78px;height:55px;justify-content:center;padding:0 4px;"><div style="font-family:'Liberation Sans', sans-serif;font-size:12.4px;line-height:15px;font-weight:bold;color:#d8172b;text-align:center;white-space:nowrap;position:relative;top:2px;letter-spacing:0px;">0,00%</div></div><div class="cell" style="left:1077px;top:827px;width:339px;height:55px;justify-content:flex-start;padding:0 3px;"><div style="font-family:'Liberation Sans', sans-serif;font-size:12.4px;line-height:15px;font-weight:normal;color:#000;text-align:left;white-space:nowrap;position:relative;top:2px;letter-spacing:0px;">Mô hình kinh doanh và kê khai thuế rõ ràng: ( Lưu ý 7-8-9,<br>Xây tiêu chí, mang thuế hỏi xin góc nhìn, chốt mặt mô hình)</div></div><div class="cell" style="left:1416px;top:827px;width:230px;height:55px;justify-content:flex-start;padding:0 4px;"><div style="font-family:'Liberation Sans', sans-serif;font-size:12.4px;line-height:15px;font-weight:normal;color:#000;text-align:left;white-space:nowrap;position:relative;top:2px;letter-spacing:0px;">Pending cho bối cảnh thay đổi<br>mục tiêu</div></div><div class="t" style="left:103px;top:885px;font-family:'Liberation Serif',serif;font-size:13.7px;line-height:17px;color:#000">Hoàn thiện việc chuẩn bị hồ sơ để đạt PCCC tiêu chuẩn cho</div><div class="a" style="left:42px;top:883px;width:1px;height:1px"></div><div class="a" style="left:1077px;top:506px;width:340px;height:65px;border:1px solid #8e2152;border-left:none"></div><div class="a" style="left:1077px;top:635px;width:340px;height:171px;border:1px solid #6f52b0;border-left:none;border-top:2px solid #1d1240"></div><div class="a" style="left:0;top:890px;width:1560px;height:5px;background:#f3f4f4"></div><div class="a" style="left:955px;top:891px;width:118px;height:4px;border-radius:3px;background:#e2e3e3"></div><div class="a" style="left:1080px;top:891px;width:188px;height:4px;border-radius:3px;background:#dcdddd"></div>
</body></html>
